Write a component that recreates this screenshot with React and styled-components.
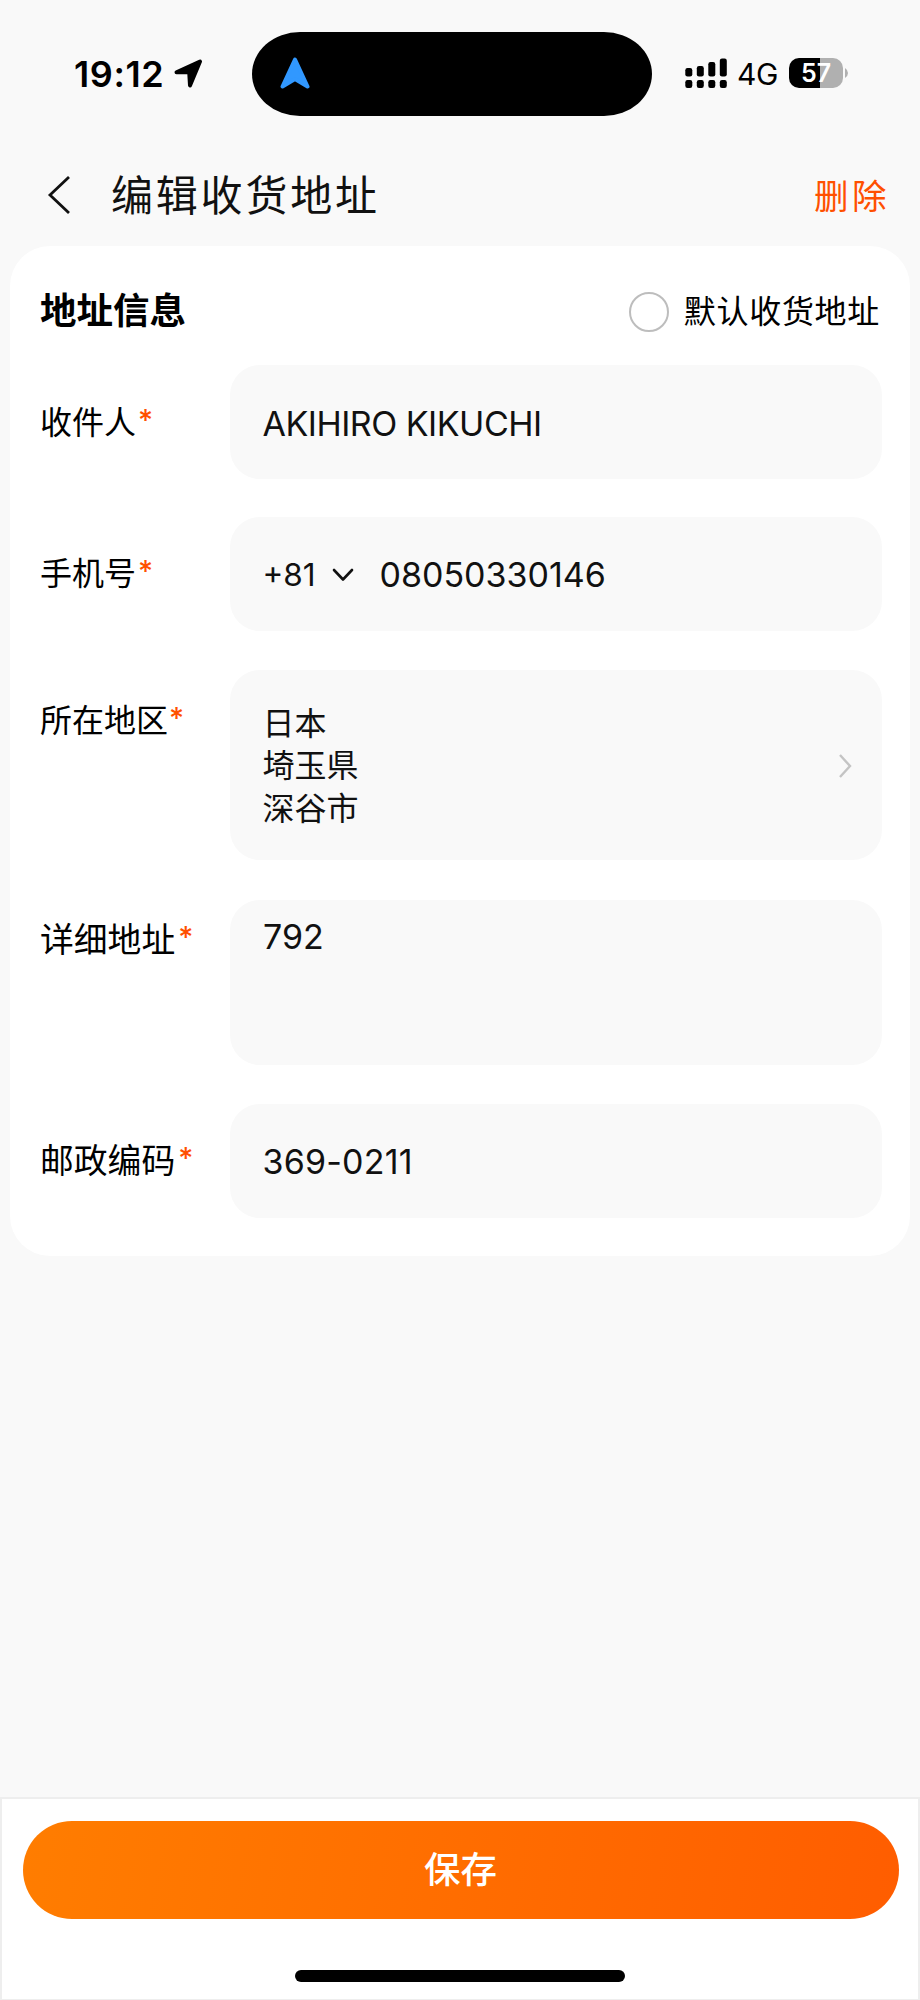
import { useState } from "react";
import styled, { createGlobalStyle } from "styled-components";

const GlobalStyle = createGlobalStyle`
    * {
        box-sizing: border-box;
    }
    body {
        margin: 0;
        background: #f9f9f9;
        font-family: Inter, "Noto Sans CJK SC", sans-serif;
    }
`

const Screen = styled.div`
    display: flex;
    flex-direction: column;
    width: 920px;
    height: 2000px;
    background: #f9f9f9;
    color: #111;
`

const StatusBar = styled.header`
    display: grid;
    grid-template-columns: 252px 400px 1fr;
    align-items: center;
    height: 84px;
    margin-top: 32px;
`

const Clock = styled.div`
    display: flex;
    align-items: center;
    gap: 10px;
    padding: 0 0 1px 74px;
    color: #000;
    font-size: 36px;
    font-weight: 600;
    line-height: 40px;
    letter-spacing: 0.6px;
`

const Island = styled.div`
    display: flex;
    align-items: center;
    height: 84px;
    padding-left: 28px;
    padding-bottom: 3px;
    border-radius: 48px / 42px;
    background: #000;
`

const Indicators = styled.div`
    display: flex;
    align-items: center;
    padding: 0 0 2px 33px;
    color: #000;
`

const Network = styled.span`
    width: 62px;
    padding: 2px 0 0 10px;
    font-size: 30px;
    line-height: 36px;
    letter-spacing: -0.5px;
`

const Battery = styled.div`
    display: flex;
    align-items: center;
    justify-content: center;
    width: 54px;
    height: 30px;
    border-radius: 10px;
    background: linear-gradient(to right, #000 57%, #b0b0b0 57%);
    color: #fff;
    font-size: 25px;
    font-weight: 600;
`

const NavBar = styled.nav`
    display: flex;
    align-items: center;
    height: 130px;
    padding: 27px 30px 0 47px;
`

const Title = styled.h1`
    flex: 1;
    margin: 2px 0 0 40px;
    font-size: 42px;
    font-weight: 400;
    line-height: 60px;
    letter-spacing: 2.8px;
`

const Delete = styled.button`
    padding: 4px 0 0;
    border: 0;
    background: none;
    color: #ff5000;
    font: inherit;
    font-size: 34.5px;
    line-height: 50px;
    letter-spacing: 3.5px;
`

const Card = styled.section`
    margin: 0 10px;
    height: 1010px;
    padding: 0 28px 0 30px;
    border-radius: 40px;
    background: #fff;
`

const CardHeader = styled.div`
    display: flex;
    align-items: center;
    justify-content: space-between;
    height: 119px;
    padding: 12px 2px 0 0;
`

const Heading = styled.h2`
    margin: -2px 0 0;
    color: #000;
    font-size: 36.5px;
    font-weight: 700;
    line-height: 50px;
`

const DefaultToggle = styled.div`
    display: flex;
    align-items: center;
    gap: 15px;
    color: #000;
    font-size: 32px;
    line-height: 44px;
    letter-spacing: 0.7px;
`

const Radio = styled.span`
    width: 40px;
    height: 40px;
    border: 2px solid ${({ $checked }) => ($checked ? "#ff5000" : "#bdbdbd")};
    border-radius: 50%;
`

const Row = styled.div`
    display: grid;
    grid-template-columns: 190px 1fr;
    margin-bottom: ${({ $gap }) => $gap}px;
`

const Label = styled.label`
    display: flex;
    height: 44px;
    margin-top: ${({ $top }) => $top}px;
    color: #000;
    font-size: ${({ $size }) => $size || 32}px;
    line-height: 44px;
`

const Required = styled.span`
    margin-left: ${({ $gap }) => $gap}px;
    margin-top: -3px;
    color: #ff5000;
    font-size: 29px;
    font-weight: 500;
    line-height: 44px;
`

const Field = styled.div`
    display: flex;
    align-items: ${({ $align }) => $align || "center"};
    height: ${({ $height }) => $height}px;
    padding: ${({ $padding }) => $padding || "2px 30px 0 32.5px"};
    border-radius: 30px;
    background: #f9f9f9;
    font-size: 34px;
    line-height: 42px;
    letter-spacing: ${({ $spacing }) => $spacing || 0}px;
`

const DialCode = styled.span`
    width: 69px;
    font-size: 31.5px;
`

const PhoneNumber = styled.span`
    margin-left: 26px;
`

const Region = styled.div`
    flex: 1;
    font-size: 32px;
    line-height: 42.3px;
`

const Footer = styled.footer`
    display: flex;
    flex-direction: column;
    align-items: center;
    height: 203px;
    margin-top: auto;
    padding: 22px 19px 0 21px;
    border: 2px solid #eee;
    border-bottom-width: 1px;
    background: #fff;
`

const SaveButton = styled.button`
    width: 100%;
    height: 98px;
    padding: 0 1px 5px 0;
    border: 0;
    border-radius: 49px;
    background: linear-gradient(100deg, #ff7d00, #ff5d00);
    color: #fff;
    font: inherit;
    font-size: 36.5px;
    font-weight: 500;
`

const HomeIndicator = styled.div`
    width: 330px;
    height: 12px;
    margin: 51px 2px 0 0;
    border-radius: 6px;
    background: #000;
`

const signalBars = [8.5, 10.5, 14.5, 18]

function Signal() {
    return (
        <svg width="42" height="31" viewBox="0 0 42 31">
            {signalBars.map((h, i) => (
                <g key={i}>
                    <rect x={i * 11.5 + 0.3} y={18.5 - h} width="7" height={h} rx="2.2" />
                    <rect x={i * 11.5 + 0.3} y="22" width="7" height="8" rx="2.2" />
                </g>
            ))}
        </svg>
    )
}

function FormRow({ label, labelTop, labelSize, gap = 39, starGap = 2, children }) {
    return (
        <Row $gap={gap}>
            <Label $top={labelTop} $size={labelSize}>{label}<Required $gap={starGap}>*</Required></Label>
            {children}
        </Row>
    )
}

export default function App() {
    const [isDefault, setIsDefault] = useState(false)
    return (
        <Screen>
            <GlobalStyle />
            <StatusBar>
                <Clock>
                    19:12
                    <svg width="29" height="29" viewBox="0 0 29 29">
                        <path d="M2.5 13.2 L26 2.5 L16 26.5 L15.2 13.2 Z" fill="#000" stroke="#000" strokeWidth="4" strokeLinejoin="round" />
                    </svg>
                </Clock>
                <Island>
                    <svg width="30" height="32" viewBox="0 0 30 32">
                        <path d="M15 2.5 L27.5 29.5 L15 22 L2.5 29.5 Z" fill="#3198ff" stroke="#3198ff" strokeWidth="4" strokeLinejoin="round" />
                    </svg>
                </Island>
                <Indicators>
                    <Signal />
                    <Network>4G</Network>
                    <Battery>57</Battery>
                    <svg width="6" height="10" viewBox="0 0 6 10">
                        <path d="M2 0 Q5 2 5 5 Q5 8 2 10 Z" fill="#b0b0b0" />
                    </svg>
                </Indicators>
            </StatusBar>
            <NavBar>
                <svg width="24" height="40" viewBox="0 0 24 40">
                    <path d="M22 2 L3 20 L22 38" fill="none" stroke="#111" strokeWidth="2.8" />
                </svg>
                <Title>编辑收货地址</Title>
                <Delete>删除</Delete>
            </NavBar>
            <Card>
                <CardHeader>
                    <Heading>地址信息</Heading>
                    <DefaultToggle onClick={() => setIsDefault(!isDefault)}>
                        <Radio $checked={isDefault} />
                        默认收货地址
                    </DefaultToggle>
                </CardHeader>
                <FormRow label="收件人" labelTop={36} gap={38}>
                    <Field $height={114} $padding="4px 30px 0 32.5px" $spacing={-0.5}>AKIHIRO KIKUCHI</Field>
                </FormRow>
                <FormRow label="手机号" labelTop={35}>
                    <Field $height={114}>
                        <DialCode>+81</DialCode>
                        <svg width="22" height="16" viewBox="0 0 22 16">
                            <path d="M2 3 L11 12.5 L20 3" fill="none" stroke="#111" strokeWidth="2.6" strokeLinecap="round" strokeLinejoin="round" />
                        </svg>
                        <PhoneNumber>08050330146</PhoneNumber>
                    </Field>
                </FormRow>
                <FormRow label="所在地区" labelTop={29} gap={40} starGap={1}>
                    <Field $height={190} $padding="3px 29px 0 32.5px">
                        <Region>
                            日本<br />
                            埼玉県<br />
                            深谷市
                        </Region>
                        <svg width="16" height="26" viewBox="0 0 16 26">
                            <path d="M3 1 L13 12 L3 23" fill="none" stroke="#c4c4c4" strokeWidth="2.4" />
                        </svg>
                    </Field>
                </FormRow>
                <FormRow label="详细地址" labelTop={18} labelSize={33.8} starGap={3}>
                    <Field $height={165} $align="flex-start" $padding="16px 33px">792</Field>
                </FormRow>
                <FormRow label="邮政编码" labelTop={35} labelSize={33.8} gap={0} starGap={3}>
                    <Field $height={114} $spacing={0.2}>369-0211</Field>
                </FormRow>
            </Card>
            <Footer>
                <SaveButton>保存</SaveButton>
                <HomeIndicator />
            </Footer>
        </Screen>
    )
}
